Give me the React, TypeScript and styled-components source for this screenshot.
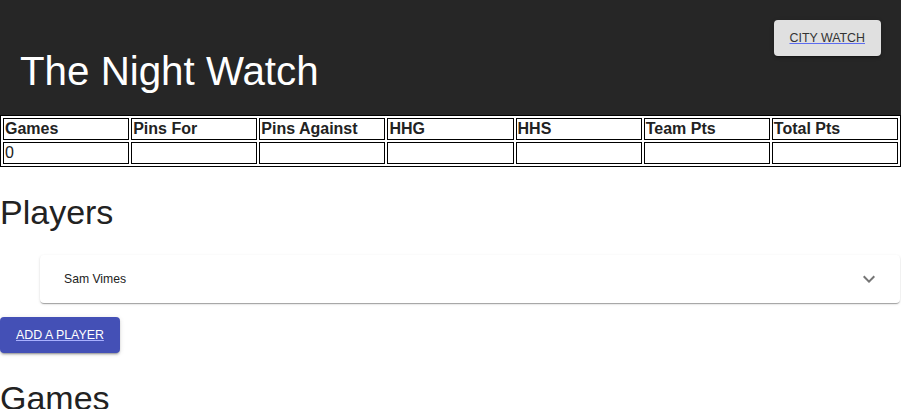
import React from "react";
import styled, { createGlobalStyle } from "styled-components";

const Global = createGlobalStyle`
  html, body { margin: 0; padding: 0; background: #fff; }
  body { font-family: "Liberation Sans", Arial, sans-serif; color: rgba(0,0,0,0.87); }
  * { box-sizing: border-box; }
`;

const Header = styled.header`
  height: 115px;
  background: #262626;
  padding: 20px;
  display: flex;
  justify-content: space-between;
  align-items: flex-start;
`;

const Title = styled.h1`
  margin: 0;
  align-self: flex-end;
  font-family: "Liberation Sans", Arial, sans-serif;
  font-weight: 400;
  font-size: 40.3px;
  line-height: 46px;
  color: #fff;
`;

const Button = styled.a<{ $primary?: boolean }>`
  display: inline-flex;
  align-items: center;
  justify-content: center;
  height: 36px;
  padding: 0 16px;
  border-radius: 4px;
  font-family: "Liberation Sans", Arial, sans-serif;
  font-size: 12.4px;
  font-weight: 400;
  text-transform: uppercase;
  text-decoration: underline;
  text-decoration-color: ${(p) => (p.$primary ? "#a9b0ff" : "#5c6bf0")};
  text-underline-offset: 1px;
  background: ${(p) => (p.$primary ? "#4450b6" : "#e0e0e0")};
  color: ${(p) => (p.$primary ? "#fff" : "#333")};
  box-shadow: 0 3px 1px -2px rgba(0,0,0,0.2), 0 2px 2px 0 rgba(0,0,0,0.14),
    0 1px 5px 0 rgba(0,0,0,0.12);
  cursor: pointer;
`;

const Stats = styled.table`
  width: 100%;
  border: 1px solid #000;
  border-spacing: 2px;
  table-layout: fixed;
  font-family: "Liberation Sans", Arial, sans-serif;
  font-size: 16px;
`;

const Th = styled.th`
  border: 1px solid #000;
  padding: 1px;
  text-align: left;
  font-weight: 700;
  color: #222;
`;

const Td = styled.td`
  border: 1px solid #000;
  padding: 1px;
  height: 22px;
  color: #222;
`;

const Heading = styled.h2`
  margin: 24px 0 22px;
  font-family: "Liberation Sans", Arial, sans-serif;
  font-weight: 400;
  font-size: 34px;
  line-height: 42px;
  color: #222;
`;

const PlayerList = styled.div`
  padding-left: 40px;
`;

const Accordion = styled.div`
  height: 48px;
  background: #fff;
  border-radius: 4px;
  margin-right: 1px;
  box-shadow: 0 2px 1px -1px rgba(0,0,0,0.2), 0 1px 1px 0 rgba(0,0,0,0.14),
    0 1px 3px 0 rgba(0,0,0,0.12);
  display: flex;
  align-items: center;
  justify-content: space-between;
  padding: 0 19px 0 24px;
`;

const PlayerName = styled.span`
  font-family: "Liberation Sans", Arial, sans-serif;
  font-size: 12.2px;
  color: #222;
`;

const ButtonRow = styled.div`
  margin-top: 14px;
`;

const App: React.FC = () => {
  const cols = ["Games", "Pins For", "Pins Against", "HHG", "HHS", "Team Pts", "Total Pts"];
  const vals = ["0", "", "", "", "", "", ""];
  return (
    <>
      <Global />
      <Header>
        <Title>The Night Watch</Title>
        <Button>City Watch</Button>
      </Header>
      <Stats>
        <thead>
          <tr>
            {cols.map((c) => (
              <Th key={c}>{c}</Th>
            ))}
          </tr>
        </thead>
        <tbody>
          <tr>
            {vals.map((v, i) => (
              <Td key={i}>{v}</Td>
            ))}
          </tr>
        </tbody>
      </Stats>
      <Heading>Players</Heading>
      <PlayerList>
        <Accordion>
          <PlayerName>Sam Vimes</PlayerName>
          <svg width="24" height="24" viewBox="0 0 24 24" fill="#757575">
            <path d="M16.59 8.59 12 13.17 7.41 8.59 6 10l6 6 6-6z" />
          </svg>
        </Accordion>
      </PlayerList>
      <ButtonRow>
        <Button $primary>Add a Player</Button>
      </ButtonRow>
      <Heading>Games</Heading>
    </>
  );
};

export default App;
